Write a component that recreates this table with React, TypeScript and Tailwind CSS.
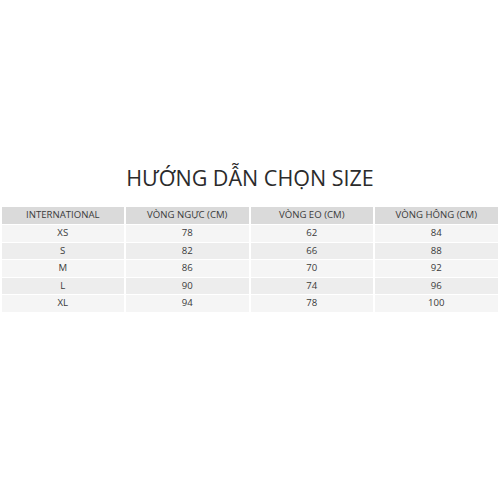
import React from 'react'

const headers = ['INTERNATIONAL', 'VÒNG NGỰC (CM)', 'VÒNG EO (CM)', 'VÒNG HÔNG (CM)']

const rows = [
  ['XS', '78', '62', '84'],
  ['S', '82', '66', '88'],
  ['M', '86', '70', '92'],
  ['L', '90', '74', '96'],
  ['XL', '94', '78', '100'],
]

export default function App() {
  return (
    <div
      className="w-[500px] h-[500px] bg-white flex flex-col items-center"
      style={{ fontFamily: '"Open Sans", "Noto Sans", sans-serif' }}
    >
      <h1 className="mt-[162px] text-[21.5px] leading-[32px] font-medium text-[#2b2b2b]">
        HƯỚNG DẪN CHỌN SIZE
      </h1>
      <div className="mt-[13px] w-[496px] ml-[-1px] grid grid-cols-4 gap-x-[2px] gap-y-[1px] text-[9.6px] text-[#3a3a3a]">
        {headers.map((h) => (
          <div key={h} className="bg-[#dadada] h-[17px] flex items-center justify-center">
            {h}
          </div>
        ))}
        {rows.map((r, i) =>
          r.map((c, j) => (
            <div
              key={`${i}-${j}`}
              className={`${i % 2 === 0 ? 'bg-[#f5f5f5]' : 'bg-[#ededed]'} h-[16.5px] flex items-center justify-center`}
            >
              {c}
            </div>
          ))
        )}
      </div>
    </div>
  )
}
